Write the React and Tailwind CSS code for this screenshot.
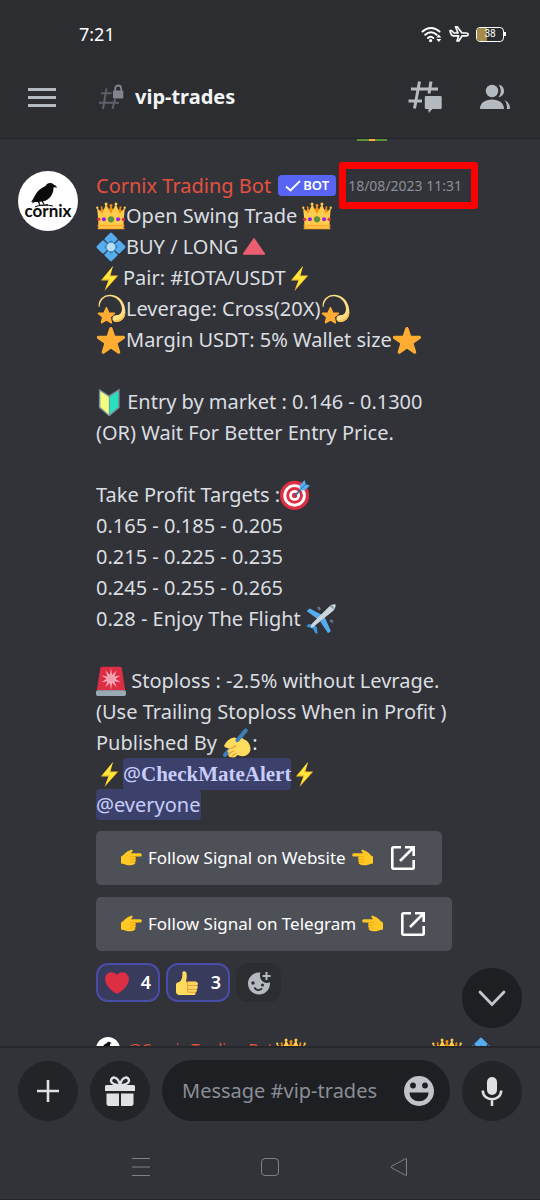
import { useState } from 'react'

function Glyph({ children, className = 'w-[30px] h-[30px]', box = '0 0 36 36' }) {
  return (
    <svg viewBox={box} className={`inline-block shrink-0 align-middle ${className}`} aria-hidden="true">
      {children}
    </svg>
  )
}

const Crown = () => (
  <Glyph>
    <g fill="#F4900C">
      <path d="M14.174 17.075L6.75 7.594l-3.722 9.481z" />
      <path d="M17.938 5.534l-6.563 12.389H24.5z" />
      <path d="M21.826 17.075l7.424-9.481 3.722 9.481z" />
    </g>
    <path fill="#FFCC4D" d="M28.669 15.19L23.887 3.523l-5.88 11.668-.007.003-.007-.004-5.88-11.668L7.331 15.19C4.197 10.833 1.28 8.042 1.28 8.042S3 20.75 3 33h30c0-12.25 1.72-24.958 1.72-24.958s-2.917 2.791-6.051 7.148z" />
    <circle fill="#5C913B" cx="18" cy="22" r="3.7" />
    <circle fill="#981CEB" cx="26.5" cy="22" r="2.4" />
    <circle fill="#DD2E44" cx="32.8" cy="22" r="2" />
    <circle fill="#981CEB" cx="9.5" cy="22" r="2.4" />
    <circle fill="#DD2E44" cx="3.1" cy="22" r="2" />
    <path fill="#FFAC33" d="M2 28.5h32v2H2zM2 32h32v2H2z" />
    <g fill="#FFCC4D">
      <circle cx="1.5" cy="8" r="1.4" />
      <circle cx="12.1" cy="3.5" r="1.8" />
      <circle cx="23.9" cy="3.5" r="1.8" />
      <circle cx="34.5" cy="8" r="1.4" />
    </g>
    <g fill="#F4900C">
      <circle cx="6.75" cy="7.6" r="1.2" />
      <circle cx="18" cy="5.5" r="1.8" />
      <circle cx="29.25" cy="7.6" r="1.2" />
    </g>
  </Glyph>
)

const Diamond = () => (
  <Glyph>
    <g fill="#55ACEE">
      <rect x="12" y="2.5" width="12" height="12" rx="1.5" transform="rotate(45 18 8.5)" />
      <rect x="12" y="21.5" width="12" height="12" rx="1.5" transform="rotate(45 18 27.5)" />
      <rect x="2.5" y="12" width="12" height="12" rx="1.5" transform="rotate(45 8.5 18)" />
      <rect x="21.5" y="12" width="12" height="12" rx="1.5" transform="rotate(45 27.5 18)" />
    </g>
    <rect x="12" y="12" width="12" height="12" rx="1" fill="#3B88C3" transform="rotate(45 18 18)" />
    <circle cx="18" cy="18" r="5.2" fill="#BDDDF4" />
  </Glyph>
)

const Triangle = () => (
  <Glyph className="w-[26px] h-[30px] mr-px ml-[3px]" box="0 0 26 30">
    <path fill="#EC5F71" stroke="#EC5F71" strokeWidth="1.6" strokeLinejoin="round" d="M13 7 23.3 22H2.7z" />
  </Glyph>
)

const Bolt = () => (
  <Glyph className="w-[27px] h-[30px]" box="0 0 27 30">
    <path fill="#FBC02D" d="M17 3 4.800 17.500h7.500L8.500 28 22.300 12.500h-7.800z" />
    <path fill="#FFE93B" d="M17 3 6.800 16.200l7.400-.5-4.800 9.600L20.500 13.500h-7.600z" />
  </Glyph>
)

const Dizzy = () => (
  <Glyph>
    <path fill="#FFDF85" d="M3.2 15.5C2.2 6.500 9.500.8 17.500 1c10.300.3 18.300 9.500 17.700 21.500-.3 6.500-4.500 10.800-10.700 11-3.800 0-5.600-2.500-4.400-5.500 1-2.700 3.600-2.200 6-2.700 3.700-.8 5.600-4 4.900-9C29.800 8.200 23.500 3 16.500 2.800 9.500 2.600 5.200 8 4.200 15.500z" />
    <path fill="#FFC54D" d="M35.200 22c-.3 7-4.500 11.300-10.700 11.500-2.500 0-4-1-4.500-2.500 5.500 1.500 11-1 13-7z" />
    <path fill="#FFAC33" stroke="#FFAC33" strokeWidth="2" strokeLinejoin="round" d="m12.500 16.500 2.700 6.300 6.800.5-5.200 4.400 1.600 6.700-5.900-3.600-5.900 3.600 1.600-6.700L3 23.300l6.800-.5z" />
  </Glyph>
)

const Star = () => (
  <Glyph>
    <path fill="#FFAC33" d="M27.287 34.627c-.404 0-.806-.124-1.152-.371L18 28.422l-8.135 5.834c-.343.247-.747.371-1.151.371-.405 0-.81-.125-1.157-.379-.688-.499-.976-1.386-.714-2.194l3.034-9.792-8.062-5.681c-.685-.505-.97-1.393-.708-2.198.262-.805 1.01-1.355 1.857-1.363l9.947-.024 3.146-9.388c.263-.809 1.015-1.347 1.864-1.347.848 0 1.6.538 1.863 1.347l3.091 9.388 10.001.024c.847.008 1.595.558 1.857 1.363.262.806-.022 1.693-.707 2.198l-8.062 5.681 3.034 9.792c.261.808-.027 1.695-.715 2.194-.346.254-.751.379-1.156.379z" />
  </Glyph>
)

const Beginner = () => (
  <Glyph className="w-[26px] h-[30px]" box="0 0 27 30">
    <path fill="#78909C" d="M3 1.200 13.500 8 24.500 1.200V21L13.700 30 3 21z" />
    <path fill="#F4FF81" d="M4.500 3.800 13.300 9.800V28L4.500 20.300z" />
    <path fill="#26E0C0" d="M23 3.800 14.200 9.800V28L23 20.300z" />
  </Glyph>
)

const Target = () => (
  <Glyph>
    <circle cx="17.500" cy="18.500" r="17.500" fill="#DD2E44" />
    <circle cx="17.500" cy="18.500" r="13.500" fill="#fff" />
    <circle cx="17.500" cy="18.500" r="10" fill="#DD2E44" />
    <circle cx="17.500" cy="18.500" r="6.500" fill="#fff" />
    <circle cx="17.500" cy="18.500" r="3.200" fill="#DD2E44" />
    <path stroke="#2A6797" strokeWidth="2" strokeLinecap="round" d="M18 18.500 29 7.500" />
    <path fill="#55ACEE" d="M24 12 23.500 6.500 29.500 0l1.500 5 5 1.500-6.500 6z" />
    <path stroke="#2A6797" strokeWidth="1" d="M25 11 31 5" />
  </Glyph>
)

const Plane = () => (
  <Glyph>
    <path fill="#66757F" d="m13 4 3-1 2 3-2 2zM29.500 18l3.500 2-1 3-3.500-2z" />
    <path fill="#55ACEE" d="M20 13.500 4.500 5.500.800 8.500 15 19zM22.500 16l7.300 16.500L26.500 35 17 21z" />
    <path fill="#3B94D9" d="M9 24.500 3 24l-2.500 3 8 2.800L11 35l3 .5L13 28z" />
    <path fill="#CCD6DD" d="M35.500.500c-2.500-.7-6 .8-8.500 3.300L9 21.500c-2.500 2.700-4 5-3 6.500 1.500 1 3.800-.7 6-3L32 8.800c2.500-2.500 4-5.800 3.500-8.300z" />
    <path fill="#8899A6" d="M29.500 2.200c1.500-.8 3 .2 4 2.600l-1.200 1.600c-.7-1.600-2-2.800-4-3.200z" />
  </Glyph>
)

const Siren = () => (
  <Glyph>
    <path fill="#DD2E44" d="M7.500 1h21c1.500 0 2.300.8 2.600 2.200L35 29H1L5 3.200C5.200 1.800 6 1 7.500 1z" />
    <path fill="#F4ABBA" d="m18 2.500 1.300 8.300 5.400-5.500-2.700 7.200 7.500-1.200-6.300 4 6.300 4.200-7.500-1.200 2.700 7.200-5.400-5.500L18 28.500 16.700 20l-5.400 5.500 2.700-7.200-7.500 1.200 6.300-4.200-6.300-4 7.500 1.200-2.700-7.200 5.400 5.500z" />
    <circle cx="18" cy="15.400" r="4" fill="#EFA0AE" />
    <path fill="#99AAB5" d="M2 29h32c1 0 2 1 2 2v3c0 1-1 2-2 2H2c-1 0-2-1-2-2v-3c0-1 1-2 2-2z" />
  </Glyph>
)

const WritingHand = () => (
  <Glyph>
    <path stroke="#3B7FB5" strokeWidth="4.500" strokeLinecap="round" d="M28.500 3 4 32" />
    <path fill="#FFDC5D" d="M4 18.500C7 14.500 10.500 12 15 11.500c1.500 0 3 1.500 3 3 2.500-3.500 6-3.500 8-1 4 1 7 4.500 8 9.500 1 5-2 9-7 10.500-3 .8-6 .3-8.500-1-2 3-5 3.500-7 2.500-2.500.5-4-1-3.700-2.800-2.300-.2-3.300-2.200-2-4L9 25l-4.500-1.500C2 22.500 2.300 20.500 4 18.500z" />
    <path stroke="#3B7FB5" strokeWidth="4.500" strokeLinecap="round" d="M28.500 3 18.500 14.800M5.500 30 3.500 32.500" />
    <path fill="none" stroke="#EF9645" strokeWidth="1.300" strokeLinecap="round" d="M8 32c1.500-2.500 3.500-4 6-4.500M12 34.500c1-2 2.500-3.500 5-4M9 25c3-.3 5-1.500 7.500-4" />
  </Glyph>
)

const Pointer = ({ flip }) => (
  <Glyph className={flip ? 'w-[22px] h-[22px] -scale-x-100' : 'w-[22px] h-[22px]'} box="0 0 22 22">
    <path fill="#FFC825" d="M1 9.500C3.500 8.700 5.200 5 8.500 4L11 2.800c1.300-.5 2.200.7 1.200 1.900L10.800 6.300H20c2.300 0 2.300 3.300 0 3.300h-5c1 .8 1 2 .2 2.600 1 .8.8 2.100-.2 2.600.6 1 .2 2-1 2.400-1 .9-4.500 1.200-7.200.8C4.500 17.700 3 16.600 1 16.600z" />
    <path fill="none" stroke="#EDA600" strokeWidth=".8" strokeLinecap="round" d="M15 9.700h-4.500M15 12.300h-4.300M14.700 15h-4" />
  </Glyph>
)

const Heart = () => (
  <Glyph className="w-6 h-6">
    <path fill="#DD2E44" d="M35.885 11.833c0-5.45-4.418-9.868-9.867-9.868-3.308 0-6.227 1.633-8.018 4.129-1.791-2.496-4.71-4.129-8.017-4.129-5.45 0-9.868 4.417-9.868 9.868 0 .772.098 1.52.266 2.241C1.751 22.587 11.216 31.568 18 34.034c6.783-2.466 16.249-11.447 17.617-19.959.17-.721.268-1.469.268-2.242z" />
  </Glyph>
)

const Thumb = () => (
  <Glyph className="w-6 h-6">
    <path fill="#FFDB5E" d="M1.500 21c0-3 2-4.500 5-4.500C10 14 11.500 9 11 3c0-3.500 5.500-3.800 6.300.5.7 4 .2 8-.8 12.500H31c4 0 4.500 5 1.500 5.800 2.500 1 2 5-.5 5.500 1.500 1.200 1 4.200-1.500 4.700 1 1.500 0 4-2.500 4H8c-4 0-6.500-1.500-6.500-5z" />
    <path fill="none" stroke="#EE9547" strokeWidth="1.600" strokeLinecap="round" d="M33 21.800H20.500c-3 0-3-5.800 0-5.800H31M32 27.300H20.500c-3 0-3-5.300 0-5.300M31 32H21c-3 0-3-4.600 0-4.600" />
  </Glyph>
)

const HashLock = () => (
  <svg viewBox="0 0 26 26" className="w-[26px] h-[26px]" aria-hidden="true">
    <path fill="none" stroke="#5d606a" strokeWidth="2" d="M1 18.700h20M3 9.300h10.500M8.500 4.500 5 25M17 15l-2.500 10" />
    <path fill="none" stroke="#80848e" strokeWidth="1.800" d="M17.200 7V4.500a3 3 0 0 1 6 0V7" />
    <rect x="15" y="6.500" width="10.300" height="8" rx="1" fill="#80848e" />
  </svg>
)

const Threads = () => (
  <svg viewBox="0 0 34 34" className="w-[34px] h-[34px]" aria-hidden="true">
    <path fill="none" stroke="#b5bac1" strokeWidth="3" d="M3 9h27M.500 21h13.500M11.500 1.500 6.500 28.500M23 1.500l-2 12" />
    <path fill="#b5bac1" d="M18 16h14.500q1.200 0 1.200 1.200v10.600q0 1.200-1.200 1.200H24.500L20.500 33v-4H18q-1.200 0-1.200-1.200V17.200Q16.800 16 18 16z" />
  </svg>
)

const Members = () => (
  <svg viewBox="0 0 30 26" className="w-[30px] h-[26px]" aria-hidden="true">
    <g fill="#b5bac1">
      <circle cx="12" cy="7" r="6.200" />
      <path d="M0 25c0-6 5-9.500 12-9.500S24 19 24 25zM18.500.8c3.500.5 5.500 3 5.500 6.200s-2 5.700-5.500 6.200c3-3.500 3-9 0-12.400zM24.500 16c3.500 1.500 5.500 4.500 5.500 9h-3c0-3.500-.5-6.500-2.500-9z" />
    </g>
  </svg>
)

function CornixLogo({ className }) {
  return (
    <svg viewBox="0 0 60 60" className={className} role="img" aria-label="Cornix">
      <circle cx="30" cy="30" r="30" fill="#fff" />
      <path fill="#0b0b0b" d="M13 31c2-2.500 3.500-6 5.500-9 2.500-3.800 6-5.500 9-7 1-2.200 3.500-3.500 6-2.800 1.300.3 2.300 1 2.600 1.800 1.500.3 2.600 1.200 2.900 2.800-1.500-.8-2.500-.8-3.500-.3.200 4.500-1.700 8.500-5 11.200-1.800 1.500-3.500 2.200-5.500 2.600l1.500 3-.9.300-2-3.100-2.200.2.800 3-.9.200-1.500-3-3 .1L14 32.600l.8-1.800z" />
      <path fill="none" stroke="#0b0b0b" strokeWidth="1" d="M17 35.800c5-2 12-2.200 18-.8M21 34.500l9-.8" />
      <text x="30" y="46" textAnchor="middle" className="font-['Lato',sans-serif] text-[17px] font-bold" fill="#0b0b0b">cornix</text>
    </svg>
  )
}

function StatusBar() {
  return (
    <div className="flex items-center justify-between h-[68px] pl-[79px] pr-[34px] text-white">
      <span className="text-lg font-normal">7:21</span>
      <div className="flex items-center gap-[7px]">
        <svg viewBox="0 0 21 18" className="w-[21px] h-[18px]" aria-label="Wi-Fi">
          <g fill="none" stroke="#fff" strokeWidth="2" strokeLinecap="round">
            <path d="M1.500 6.500c5-4.700 12-4.700 17 0" />
            <path d="M4.200 9.800c3.500-3.300 8-3.300 11.500 0" />
            <path d="M7 13c2-1.700 3.500-1.700 5.300 0" />
          </g>
          <circle cx="9.600" cy="15.600" r="1.600" fill="#fff" />
          <path fill="#fff" d="m17.800 9.500 2.500 3h-5zM17.800 17l2.500-3h-5z" />
        </svg>
        <svg viewBox="0 0 20 18" className="w-5 h-[18px]" aria-label="Airplane mode">
          <path fill="none" stroke="#fff" strokeWidth="1.700" strokeLinejoin="round" d="M1 5.500h1.500L5 8h4L6.500 1.800h1.700L13 8h4c2.800 0 2.800 2.800 0 2.800h-3.800L9.800 16H8l1.700-5.200H4.500C2.500 10.800 1.500 8.500 1 5.500z" />
        </svg>
        <div className="flex items-center" aria-label="Battery 38%">
          <div className="relative flex items-center justify-center w-7 h-[15px] border border-white rounded-[4px] overflow-hidden">
            <span className="absolute left-0 inset-y-0 w-2/5 bg-[#a48b48]" />
            <span className="relative font-['Roboto',sans-serif] text-[10px] leading-3">38</span>
          </div>
          <span className="w-[2px] h-1 bg-white" />
        </div>
      </div>
    </div>
  )
}

function ChannelBar() {
  return (
    <div className="flex items-center h-[70px] pb-3 pl-7 pr-[30px]">
      <button type="button" aria-label="Open menu" className="w-7 flex flex-col gap-[5px]">
        <span className="h-[3px] bg-[#b5bac1]" />
        <span className="h-[3px] bg-[#b5bac1]" />
        <span className="h-[3px] bg-[#b5bac1]" />
      </button>
      <h1 className="flex items-center gap-[11px] ml-[42px] text-xl font-bold text-[#f2f3f5]">
        <HashLock />
        vip-trades
      </h1>
      <div className="flex items-center gap-[38px] ml-auto">
        <button type="button" aria-label="Threads"><Threads /></button>
        <button type="button" aria-label="Members"><Members /></button>
      </div>
    </div>
  )
}

function Mention({ children }) {
  return <a href="#mention" className="inline-block align-top rounded-[4px] bg-[#3c416b] text-[#c9cdfb]">{children}</a>
}

function SignalButton({ label }) {
  return (
    <button type="button" className="flex items-center h-[54px] px-6 rounded-[5px] bg-[#4e5058] text-[17px] text-white">
      <Pointer />
      <span className="mx-[6px]">{label}</span>
      <Pointer flip />
      <svg viewBox="0 0 30 30" className="w-[30px] h-[30px] ml-[14px]" fill="none" stroke="#fff" strokeWidth="2.600" aria-hidden="true">
        <path strokeLinejoin="round" d="M13 4.300H5.500a1.200 1.200 0 0 0-1.200 1.200v19a1.200 1.200 0 0 0 1.200 1.200h19a1.200 1.200 0 0 0 1.200-1.200V17" />
        <path d="M17 4.300h8.700V13M25 5 12 18" />
      </svg>
    </button>
  )
}

function Reaction({ icon, count, label }) {
  const [on, setOn] = useState(true)
  return (
    <button
      type="button"
      aria-pressed={on}
      aria-label={label}
      onClick={() => setOn(!on)}
      className="flex items-center justify-between w-16 h-[39px] px-[7px] rounded-xl border-2 border-[#4a4da8] bg-[#383b5b] text-[18px] font-semibold text-white"
    >
      {icon}
      <span>{count}</span>
    </button>
  )
}

function Message() {
  return (
    <article className="flex gap-[18px] px-[18px] pt-[29px]">
      <CornixLogo className="w-[60px] h-[60px] shrink-0" />
      <div className="flex-1 min-w-0">
        <header className="flex items-center h-[29px] whitespace-nowrap">
          <span className="text-[20px] text-[#e5503f]">Cornix Trading Bot</span>
          <span className="flex items-center justify-center gap-[2px] w-[58px] h-[21px] ml-[7px] rounded-[4px] bg-[#5865f2] text-[13px] font-semibold text-white">
            <svg viewBox="0 0 16 12" className="w-4 h-3" fill="none" stroke="#fff" strokeWidth="1.800" aria-hidden="true">
              <path d="m1 6.500 4.500 4L15 1" />
            </svg>
            BOT
          </span>
          <span className="relative ml-3 text-[14px] text-[#8c909a]">
            18/08/2023 11:31
            <span className="absolute -left-[9px] -right-[16px] -inset-y-[13px] border-[7px] border-[#fe0000] rounded-[3px]" />
          </span>
        </header>

        <div className="text-[20px] leading-[31px] text-[#dbdee1] [&>p]:h-[31px] [&>p]:whitespace-nowrap [&_svg]:-mt-1">
          <p><Crown />Open Swing Trade <Crown /></p>
          <p><Diamond />BUY / LONG<Triangle /></p>
          <p><Bolt />Pair: #IOTA/USDT<Bolt /></p>
          <p><Dizzy />Leverage: Cross(20X)<Dizzy /></p>
          <p><Star />Margin USDT: 5% Wallet size<Star /></p>
          <p></p>
          <p><Beginner /> Entry by market : 0.146 - 0.1300</p>
          <p>(OR) Wait For Better Entry Price.</p>
          <p></p>
          <p>Take Profit Targets :<Target /></p>
          <p>0.165 - 0.185 - 0.205</p>
          <p>0.215 - 0.225 - 0.235</p>
          <p>0.245 - 0.255 - 0.265</p>
          <p>0.28 - Enjoy The Flight <Plane /></p>
          <p></p>
          <p><Siren /> Stoploss : -2.5% without Levrage.</p>
          <p>(Use Trailing Stoploss When in Profit )</p>
          <p>Published By <WritingHand />:</p>
          <p><Bolt /><Mention>@<span className="font-['Liberation_Serif',serif] text-[21px] font-bold">CheckMateAlert</span></Mention><Bolt /></p>
          <p><Mention>@everyone</Mention></p>
        </div>

        <div className="flex flex-col items-start gap-3 mt-[11px]">
          <SignalButton label="Follow Signal on Website" />
          <SignalButton label="Follow Signal on Telegram" />
          <div className="flex gap-[6px]">
            <Reaction icon={<Heart />} count={4} label="Heart, 4" />
            <Reaction icon={<Thumb />} count={3} label="Thumbs up, 3" />
            <button type="button" aria-label="Add reaction" className="flex items-center justify-center w-[45px] h-[39px] rounded-xl bg-[#2b2d31]">
              <svg viewBox="0 0 24 24" className="w-6 h-6" aria-hidden="true">
                <path fill="#b5bac1" d="M12 1.500C6 1.500 1 6.400 1 12.500S6 23.500 12 23.500s11-4.800 11-11c0-.4 0-.8-.1-1.200-1 .5-1.800.7-2.900.7A7.500 7.500 0 0 1 13.500 1.600z" />
                <path stroke="#b5bac1" strokeWidth="2" d="M19.500 1v8M15.500 5h8" />
                <g fill="#2b2d31"><circle cx="6" cy="12" r="1.700" /><circle cx="15.500" cy="14" r="1.500" /></g>
                <path fill="none" stroke="#2b2d31" strokeWidth="1.800" d="M7.500 16.500c1.500 3 5.500 3.500 7.500.8" />
              </svg>
            </button>
          </div>
        </div>
      </div>
    </article>
  )
}

function Composer() {
  const [text, setText] = useState('')
  const round = 'flex items-center justify-center shrink-0 w-[60px] h-[60px] rounded-full bg-[#232428]'
  return (
    <form onSubmit={(e) => e.preventDefault()} className="flex items-center gap-3 px-[18px] pt-3 pb-[13px] border-t-2 border-[#26272b]">
      <button type="button" aria-label="Add attachment" className={round}>
        <svg viewBox="0 0 22 22" className="w-[22px] h-[22px]" stroke="#dfe1e5" strokeWidth="2.600" aria-hidden="true">
          <path d="M11 0v22M0 11h22" />
        </svg>
      </button>
      <button type="button" aria-label="Send a gift" className={round}>
        <svg viewBox="0 0 30 30" className="w-[30px] h-[30px]" aria-hidden="true">
          <g fill="#dfe1e5">
            <path d="M1.500 9h27Q30 9 30 10.500V15H0v-4.500Q0 9 1.500 9zM1.500 17.500H14V30H4q-2.500 0-2.500-2.500zM16 17.500h12.500v10Q28.500 30 26 30H16z" />
          </g>
          <path fill="none" stroke="#dfe1e5" strokeWidth="2.400" d="M15 9.500C12 9 6 8.500 6 4.800c0-4.500 7-5.500 9 4.700zM15 9.500C18 9 24 8.500 24 4.800c0-4.500-7-5.500-9 4.700z" />
        </svg>
      </button>
      <div className="flex items-center flex-1 min-w-0 h-[61px] pl-5 pr-4 rounded-full bg-[#1e1f22]">
        <input
          type="text"
          aria-label="Message #vip-trades"
          value={text}
          onChange={(e) => setText(e.target.value)}
          placeholder="Message #vip-trades"
          className="flex-1 min-w-0 bg-transparent text-[20px] text-[#dbdee1] placeholder:text-[#8a8e98] outline-none"
        />
        <button type="button" aria-label="Emoji">
          <svg viewBox="0 0 30 30" className="w-[30px] h-[30px]" aria-hidden="true">
            <circle cx="15" cy="15" r="15" fill="#c0c3ca" />
            <g fill="#1e1f22">
              <circle cx="9" cy="9.500" r="2.900" />
              <circle cx="21" cy="9.500" r="2.900" />
              <path d="M5.500 16.500h19c0 5-4 8.800-9.500 8.800s-9.500-3.800-9.500-8.800z" />
            </g>
          </svg>
        </button>
      </div>
      <button type="button" aria-label="Record voice message" className={round}>
        <svg viewBox="0 0 22 30" className="w-[22px] h-[30px]" aria-hidden="true">
          <rect x="6" y="1" width="10" height="18" rx="5" fill="#dfe1e5" />
          <path fill="none" stroke="#dfe1e5" strokeWidth="2.500" d="M1.800 14.500c0 11.500 18.400 11.500 18.400 0M11 23v7" />
        </svg>
      </button>
    </form>
  )
}

export default function App() {
  return (
    <div className="flex flex-col h-screen bg-[#313338] font-['Noto_Sans',sans-serif]">
      <header className="bg-[#2b2d31] border-b border-[#232428]">
        <StatusBar />
        <ChannelBar />
      </header>

      <main className="relative flex-1 min-h-0 overflow-hidden">
        {/* tail of the previous message */}
        <div className="flex h-[3px] pl-[357px]">
          <span className="w-3 h-[2px] bg-[#5c913b]" />
          <span className="w-[6px] h-[2px] bg-[#ffac33]" />
          <span className="w-3 h-[2px] bg-[#5c913b]" />
        </div>
        <Message />
        <div className="flex items-start pl-24 pt-[35px] whitespace-nowrap">
          <CornixLogo className="w-6 h-6 shrink-0" />
          <span className="ml-2 w-[148px] text-[15px] text-[#e5503f]">@Cornix Trading Bot</span>
          <Crown />
          <span className="w-[126px]" />
          <Crown />
          <span className="w-1" />
          <Diamond />
        </div>
        <button type="button" aria-label="Jump to latest" className="absolute right-[18px] bottom-[18px] flex items-center justify-center w-[60px] h-[60px] rounded-full bg-[#1e1f22]">
          <svg viewBox="0 0 28 18" className="w-7 h-[18px]" fill="none" stroke="#c4c7cd" strokeWidth="2.800" strokeLinecap="round" aria-hidden="true">
            <path d="M2 3 14 15.500 26 3" />
          </svg>
        </button>
      </main>

      <Composer />

      <nav className="flex items-center h-[66px] px-[76px] border-b border-[#26272b] text-[#7f8186]">
        <button type="button" aria-label="Recents" className="flex-1 flex justify-center">
          <svg viewBox="0 0 18 18" className="w-[18px] h-[18px]" stroke="currentColor"><path d="M0 .500h18M0 9h18M0 17.500h18" /></svg>
        </button>
        <button type="button" aria-label="Home" className="flex-1 flex justify-center">
          <svg viewBox="0 0 18 18" className="w-[18px] h-[18px]" fill="none" stroke="currentColor"><rect x=".5" y=".5" width="17" height="17" rx="3.500" /></svg>
        </button>
        <button type="button" aria-label="Back" className="flex-1 flex justify-center">
          <svg viewBox="0 0 18 18" className="w-[18px] h-[18px]" fill="none" stroke="currentColor" strokeLinejoin="round"><path d="M16.500.800v16.400q0 .500-.8.200L1.300 9.600q-.7-.6 0-1.200L15.700.600q.8-.3.800.2z" /></svg>
        </button>
      </nav>
    </div>
  )
}
